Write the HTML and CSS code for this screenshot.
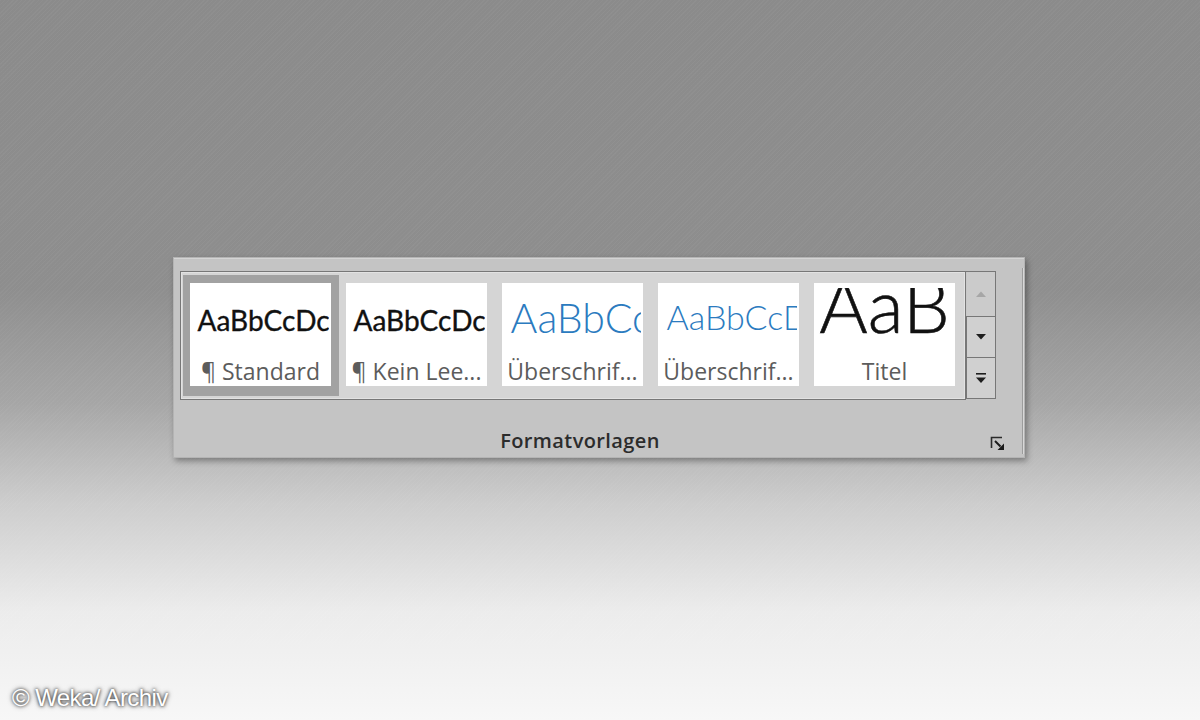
FILE: index.html
```html
<!DOCTYPE html>
<html lang="de">
<head>
    <meta charset="UTF-8">
    <meta name="viewport" content="width=device-width, initial-scale=1.0">
    <title>Formatvorlagen</title>
    <link rel="stylesheet" href="styles.css">
</head>
<body>
<div class="stage">
    <div class="group">
        <div class="group-main">
            <div class="gallery-row">
                <div class="gallery">
                    <div class="slot selected">
                        <div class="tile">
                            <span class="preview p-normal">AaBbCcDc</span>
                            <span class="name">¶ Standard</span>
                        </div>
                    </div>
                    <div class="slot">
                        <div class="tile">
                            <span class="preview p-normal">AaBbCcDc</span>
                            <span class="name">¶ Kein Lee...</span>
                        </div>
                    </div>
                    <div class="slot">
                        <div class="tile">
                            <span class="preview p-h1">AaBbCcD</span>
                            <span class="name">Überschrif...</span>
                        </div>
                    </div>
                    <div class="slot">
                        <div class="tile">
                            <span class="preview p-h2">AaBbCcDd</span>
                            <span class="name">Überschrif...</span>
                        </div>
                    </div>
                    <div class="slot">
                        <div class="tile">
                            <span class="preview p-title">AaB</span>
                            <span class="name">Titel</span>
                        </div>
                    </div>
                </div>
                <div class="scroller">
                    <button class="scroll-btn disabled" title="Zeile nach oben">
                        <svg width="10" height="6" viewBox="0 0 10 6"><path d="M0 6L5 0.5L10 6z"/></svg>
                    </button>
                    <button class="scroll-btn" title="Zeile nach unten">
                        <svg width="10" height="6" viewBox="0 0 10 6"><path d="M0 0L10 0L5 5.5z"/></svg>
                    </button>
                    <button class="scroll-btn" title="Weitere">
                        <svg width="10" height="11" viewBox="0 0 10 11"><path d="M0 0h10v1.6H0z"/><path d="M0 4.5L10 4.5L5 10z"/></svg>
                    </button>
                </div>
            </div>
            <div class="group-footer">
                <span class="group-label">Formatvorlagen</span>
                <button class="launcher" title="Formatvorlagen anzeigen">
                    <svg width="15" height="15" viewBox="0 0 15 15">
                        <path d="M1.5 12V1.5H12" fill="none" stroke="#2a2a2a" stroke-width="1.6"/>
                        <path d="M5 5l5.5 5.5" fill="none" stroke="#1a1a1a" stroke-width="2"/>
                        <path d="M14 7.5V14H7.5z" fill="#1a1a1a"/>
                    </svg>
                </button>
            </div>
        </div>
        <div class="divider"></div>
    </div>
    <div class="credit">© Weka/ Archiv</div>
</div>
</body>
</html>
```

FILE: styles.css
```css
html, body {
    margin: 0;
    padding: 0;
}
body {
    width: 1200px;
    height: 720px;
    overflow: hidden;
    background:
        repeating-linear-gradient(135deg, rgba(255, 255, 255, 0.03) 0 1px, transparent 1px 3px),
        linear-gradient(to bottom, #8b8b8b 0%, #8e8e8e 40%, #a6a6a6 56%, #cdcdcd 70%, #ececec 85%, #f7f7f7 100%);
    font-family: "Open Sans", "Noto Sans", sans-serif;
}
.stage {
    height: 720px;
    display: flex;
    flex-direction: column;
    box-sizing: border-box;
    padding: 257px 0 8px 173px;
}

/* ribbon group */
.group {
    width: 852px;
    height: 201px;
    box-sizing: border-box;
    background: #c4c4c4;
    border: 1px solid #b4b4b4;
    box-shadow: inset 0 1px 0 #d4d4d4, 2px 3px 6px rgba(0, 0, 0, 0.35);
    display: flex;
}
.group-main {
    display: flex;
    flex-direction: column;
    padding: 13px 0 0 6px;
}
.gallery-row {
    display: flex;
}
.gallery {
    display: flex;
    padding: 3px 2px;
    background: #d5d5d5;
    border: 1px solid #777;
    box-shadow: inset 0 0 0 1px #e2e2e2;
}
.slot {
    width: 156px;
    height: 121px;
    box-sizing: border-box;
    padding: 8px 8px 10px 7px;
}
.slot.selected {
    background: #a2a2a2;
}
.tile {
    height: 103px;
    background: #fff;
    overflow: hidden;
    display: flex;
    flex-direction: column;
    align-items: center;
}
.preview {
    width: 136px;
    height: 62px;
    box-sizing: border-box;
    white-space: nowrap;
    overflow: hidden;
    display: flex;
    align-items: flex-end;
    font-family: Lato, "Open Sans", sans-serif;
    line-height: 1;
    color: #111;
}
.p-normal {
    font-size: 28px;
    font-weight: 400;
    padding-left: 5px;
    padding-bottom: 10px;
    -webkit-text-stroke: 0.35px #111;
}
.p-h1 {
    font-size: 41px;
    font-weight: 300;
    color: #2b7bbf;
    padding-left: 6px;
    padding-bottom: 6px;
}
.p-h2 {
    font-size: 34px;
    font-weight: 300;
    color: #2b7bbf;
    padding-left: 6px;
    padding-bottom: 10px;
}
.p-title {
    font-size: 74px;
    font-weight: 300;
    justify-content: center;
    margin-top: 5px;
    height: 57px;
    padding-bottom: 0;
    -webkit-text-stroke: 0.6px #111;
}
.name {
    font-size: 23px;
    color: #5c5c5c;
    line-height: 30px;
    margin-top: 12px;
    white-space: nowrap;
}
.p-title + .name {
    margin-top: 14px;
}

/* gallery scroll buttons */
.scroller {
    width: 30px;
    display: flex;
    flex-direction: column;
    border: 1px solid #777;
    border-left: none;
    height: 128px;
    box-sizing: border-box;
}
.scroll-btn {
    flex: 1;
    border: none;
    border-left: 1px solid #777;
    border-top: 1px solid #777;
    background: #d0d0d0;
    padding: 0;
    display: flex;
    align-items: center;
    justify-content: center;
    cursor: pointer;
}
.scroll-btn:first-child {
    flex: 1.1;
    border-top: none;
    border-left: 1px solid #c8c8c8;
    background: #cbcbcb;
}
.scroll-btn svg {
    fill: #1e1e1e;
}
.scroll-btn.disabled svg {
    fill: #a6a6a6;
}
.divider {
    width: 1px;
    height: 186px;
    margin: 10px 0 0 17px;
    background: #9c9c9c;
    box-shadow: 1px 0 0 #d8d8d8;
}

/* group label row */
.group-footer {
    flex: 1;
    display: flex;
    align-items: center;
    padding-top: 24px;
}
.group-label {
    width: 800px;
    text-align: center;
    font-size: 20px;
    font-weight: 600;
    color: #2c2c2c;
    letter-spacing: 0.4px;
}
.launcher {
    border: none;
    background: none;
    padding: 0;
    margin-left: 10px;
    margin-top: 6px;
    width: 15px;
    height: 15px;
    cursor: pointer;
}

/* picture credit */
.credit {
    margin-top: auto;
    margin-left: -161px;
    font-family: "Liberation Sans", Arial, sans-serif;
    font-size: 24px;
    letter-spacing: -0.6px;
    color: #fff;
    text-shadow: 0 0 3px #333, 0 0 5px #555;
}
```
